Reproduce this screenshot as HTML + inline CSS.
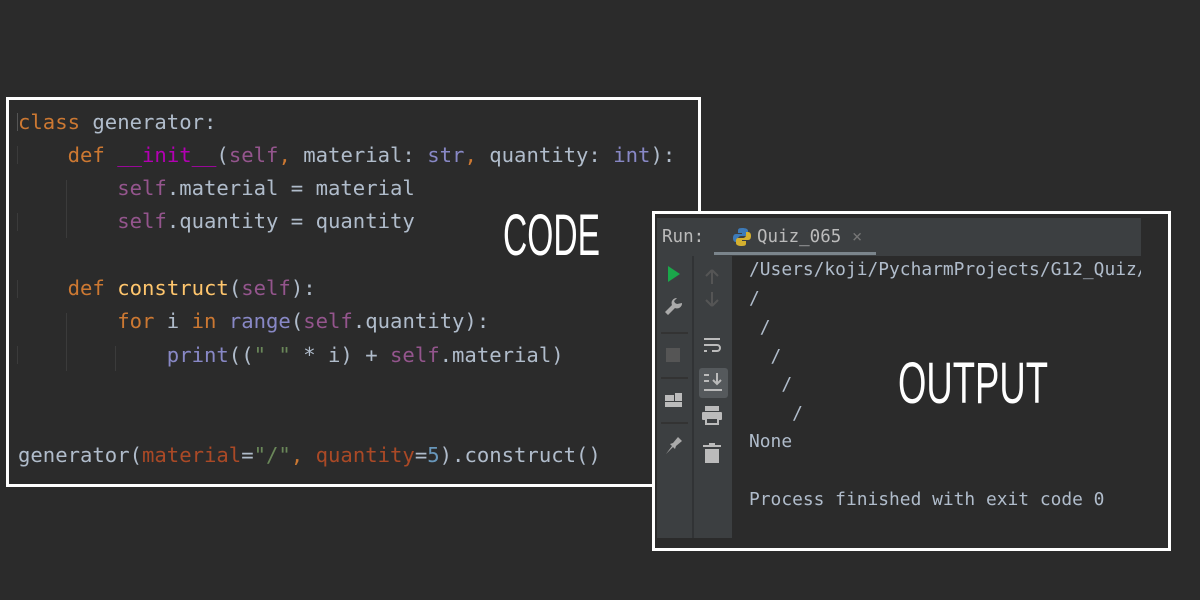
<!DOCTYPE html>
<html><head><style>
*{margin:0;padding:0;box-sizing:border-box}
body{width:1200px;height:600px;background:#2b2b2b;position:relative;overflow:hidden;font-family:"DejaVu Sans Mono","Liberation Mono",monospace}
.abs{position:absolute}
#code{left:6px;top:97px;width:695px;height:390px;border:3px solid #fff}
.cl{position:absolute;left:18px;font-size:20.6px;color:#b0bccb;white-space:pre;line-height:24px}
.k{color:#cc7832}.s{color:#94558d}.b{color:#8888c6}.f{color:#ffc66d}.m{color:#b200b2}.p{color:#aa4926}.n{color:#6897bb}.g{color:#6a8759}
.guide{position:absolute;width:1px;background:#3b3b3b}
#out{left:652px;top:211px;width:519px;height:340px;border:3px solid #fff;background:#2b2b2b}
.ol{position:absolute;left:749px;font-size:17.9px;color:#b0bccb;white-space:pre;line-height:22px}
</style></head><body>
<div id="code" class="abs"></div>
<div class="guide" style="left:17px;top:113px;height:18px;background:#555"></div>
<div class="guide" style="left:17px;top:146px;height:18px"></div>
<div class="guide" style="left:66px;top:180px;height:58px"></div>
<div class="guide" style="left:17px;top:213px;height:18px"></div>
<div class="guide" style="left:17px;top:280px;height:18px"></div>
<div class="guide" style="left:66px;top:313px;height:58px"></div>
<div class="guide" style="left:115px;top:346px;height:25px"></div>
<div class="guide" style="left:17px;top:346px;height:18px"></div>
<div class="cl" style="top:110px"><span class="k">class</span> generator:</div>
<div class="cl" style="top:143px">    <span class="k">def</span> <span class="m">__init__</span>(<span class="s">self</span><span class="k">,</span> material: <span class="b">str</span><span class="k">,</span> quantity: <span class="b">int</span>):</div>
<div class="cl" style="top:176px">        <span class="s">self</span>.material = material</div>
<div class="cl" style="top:209px">        <span class="s">self</span>.quantity = quantity</div>
<div class="cl" style="top:276px">    <span class="k">def</span> <span class="f">construct</span>(<span class="s">self</span>):</div>
<div class="cl" style="top:309px">        <span class="k">for</span> i <span class="k">in</span> <span class="b">range</span>(<span class="s">self</span>.quantity):</div>
<div class="cl" style="top:343px">            <span class="b">print</span>((<span class="g">" "</span> * i) + <span class="s">self</span>.material)</div>
<div class="cl" style="top:443px">generator(<span class="p">material</span>=<span class="g">"/"</span><span class="k">,</span> <span class="p">quantity</span>=<span class="n">5</span>).construct()</div>

<svg class="abs" style="left:0;top:0" width="1200" height="600">
<text x="503" y="255" font-family="Liberation Sans" font-size="58" fill="#fff" textLength="97" lengthAdjust="spacingAndGlyphs" transform="translate(503 255) scale(1 1) translate(-503 -255)">CODE</text>
</svg>

<div id="out" class="abs"></div>
<div class="abs" style="left:657px;top:218px;width:484px;height:38px;background:#3c3f41"></div>
<div class="abs" style="left:714px;top:252px;width:162px;height:3px;background:#7b858c"></div>
<div class="abs" style="left:662px;top:227px;font-size:17.5px;color:#bbb">Run:</div>
<svg class="abs" style="left:732px;top:227px" width="20" height="20" viewBox="0 0 20 20">
<path d="M10 1c-4 0-4 1.5-4 3v2h4v1H4C2 7 1 8.5 1 11s1 4 3 4h2v-3c0-2 1.5-3 3.5-3h4c1.5 0 2.5-1 2.5-2.5V4c0-2-2-3-6-3z" fill="#3d7ab8"/>
<path d="M10 19c4 0 4-1.5 4-3v-2h-4v-1h6c2 0 3-1.5 3-4s-1-4-3-4h-2v3c0 2-1.5 3-3.5 3h-4C5 11 4 12 4 13.5V16c0 2 2 3 6 3z" fill="#d4b030"/>
</svg>
<div class="abs" style="left:757px;top:227px;font-size:17.5px;color:#bbb">Quiz_065</div>
<div class="abs" style="left:852px;top:227px;font-size:17px;color:#777">×</div>
<div class="abs" style="left:657px;top:256px;width:35px;height:282px;background:#3c3f41"></div>
<div class="abs" style="left:694px;top:256px;width:38px;height:282px;background:#3c3f41"></div>
<div class="abs" style="left:692px;top:256px;width:2px;height:282px;background:#313335"></div>
<svg class="abs" style="left:657px;top:256px" width="76" height="282">
<path d="M11 10l12 8-12 8z" fill="#1aa84a"/>
<path d="M25 47a5 5 0 0 1-7 5l-7 7-3-3 7-7a5 5 0 0 1 5-7l-3 3 1 2 2 1z" fill="#aaa"/>
<rect x="4" y="76" width="27" height="2" fill="#333"/>
<rect x="9" y="92" width="14" height="14" fill="#555"/>
<rect x="4" y="121" width="27" height="2" fill="#333"/>
<rect x="8" y="139" width="9" height="6" fill="#bbb"/><rect x="18" y="137" width="7" height="8" fill="#bbb"/><rect x="8" y="146" width="17" height="5" fill="#bbb"/>
<rect x="4" y="166" width="27" height="2" fill="#333"/>
<path d="M9 198l7-7-3-3 3-1 5-6 4 4-6 5-1 3-3-3-6 8z" fill="#aaa"/>
<path d="M55 14l-6 6M55 14l6 6M55 14v14" stroke="#555" stroke-width="2" fill="none"/>
<path d="M55 50l-6-6M55 50l6-6M55 36v14" stroke="#555" stroke-width="2" fill="none"/>
<path d="M47 83h16M47 89h13a3 3 0 0 1 0 6h-5M47 95h3" stroke="#bbb" stroke-width="2" fill="none"/>
<rect x="42" y="112" width="29" height="30" rx="3" fill="#55595c"/>
<path d="M47 119h5M47 125h5M47 134h18M60 117v11M56 124l4 4 4-4" stroke="#bbb" stroke-width="2" fill="none"/>
<rect x="48" y="150" width="14" height="5" fill="#bbb"/><rect x="45" y="156" width="20" height="8" rx="1" fill="#bbb"/><rect x="49" y="162" width="12" height="6" fill="#3c3f41" stroke="#bbb" stroke-width="2"/>
<rect x="46" y="189" width="18" height="2" fill="#bbb"/><rect x="52" y="187" width="6" height="2" fill="#bbb"/><rect x="48" y="193" width="14" height="14" fill="#bbb"/>
</svg>
<div class="abs" style="left:733px;top:256px;width:408px;height:282px;background:#2b2b2b;overflow:hidden"></div>
<div class="ol" style="top:259px;width:392px;overflow:hidden">/Users/koji/PycharmProjects/G12_Quiz/</div>
<div class="ol" style="top:288px">/</div>
<div class="ol" style="top:317px"> /</div>
<div class="ol" style="top:346px">  /</div>
<div class="ol" style="top:374px">   /</div>
<div class="ol" style="top:403px">    /</div>
<div class="ol" style="top:431px">None</div>
<div class="ol" style="top:489px">Process finished with exit code 0</div>
<svg class="abs" style="left:0;top:0" width="1200" height="600">
<text x="898" y="403" font-family="Liberation Sans" font-size="58" fill="#fff" textLength="150" lengthAdjust="spacingAndGlyphs">OUTPUT</text>
</svg>
</body></html>
